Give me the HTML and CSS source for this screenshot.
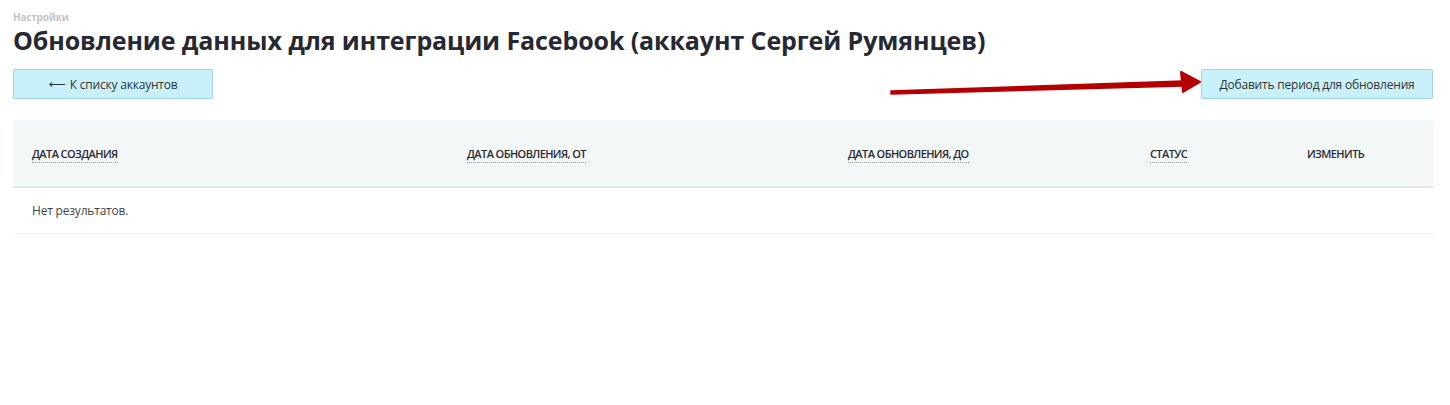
FILE: index.html
```html
<!DOCTYPE html>
<html lang="ru">
<head>
<meta charset="utf-8">
<title>Обновление данных для интеграции Facebook</title>
<link rel="stylesheet" href="styles.css">
</head>
<body>
<div class="page">
  <div class="crumb">Настройки</div>
  <h1 class="title">Обновление данных для интеграции Facebook (аккаунт Сергей Румянцев)</h1>
  <div class="toolbar">
    <a class="btn btn-back" href="#"><span class="back-arrow">&#x27F5;</span>К списку аккаунтов</a>
    <a class="btn btn-add" href="#">Добавить период для обновления</a>
    <svg class="pointer" width="313" height="32" viewBox="0 0 313 32" aria-hidden="true">
      <path d="M2 25 L294 15 L294 20 L2 28 Z" fill="#b40000" stroke="#b40000" stroke-width="1.5" stroke-linejoin="round"/>
      <path d="M292 6 L311 16 L294 26 Z" fill="#b40000" stroke="#b40000" stroke-width="2" stroke-linejoin="round"/>
    </svg>
  </div>
  <div class="grid">
    <div class="grid-head">
      <span class="col"><span class="sort">Дата создания</span></span>
      <span class="col"><span class="sort">Дата обновления, от</span></span>
      <span class="col"><span class="sort">Дата обновления, до</span></span>
      <span class="col"><span class="sort">Статус</span></span>
      <span class="col">Изменить</span>
    </div>
    <div class="grid-empty">Нет результатов.</div>
  </div>
</div>
</body>
</html>
```
FILE: styles.css
```css
html, body {
  margin: 0;
  padding: 0;
  background: #fff;
}

body {
  font-family: "Open Sans", "Noto Sans", sans-serif;
  color: #2b2b33;
}

.page {
  padding: 10px 17px 0 13px;
}

.crumb {
  font-size: 10px;
  font-weight: 700;
  color: #c4c4c8;
  line-height: 14px;
  letter-spacing: -0.2px;
}

.title {
  margin: 0;
  font-size: 25px;
  font-weight: 700;
  line-height: 32px;
  color: #262833;
  letter-spacing: -0.1px;
}

.toolbar {
  position: relative;
  display: flex;
  justify-content: space-between;
  align-items: center;
  margin-top: 13px;
}

.btn {
  display: flex;
  align-items: center;
  justify-content: center;
  height: 30px;
  box-sizing: border-box;
  background: #c8f1fb;
  border: 1px solid #9ed4e3;
  border-radius: 2px;
  color: #333;
  font-size: 12px;
  text-decoration: none;
  letter-spacing: -0.2px;
}

.back-arrow {
  font-family: "DejaVu Sans", sans-serif;
  font-size: 12px;
  margin-right: 4px;
  letter-spacing: 0;
}

.btn-back {
  width: 200px;
}

.btn-add {
  width: 232px;
}

/* red callout arrow pointing at the add button */
.pointer {
  position: absolute;
  right: 231px;
  top: -3px;
}

.grid {
  margin-top: 21px;
}

.grid-head {
  display: grid;
  grid-template-columns: 435px 381px 302px 157px 1fr;
  align-items: center;
  height: 66px;
  background: #f4f7f8;
  border-bottom: 2px solid #e3e6e8;
  font-size: 11px;
  font-weight: 600;
  text-transform: uppercase;
  color: #2b2b33;
  letter-spacing: -0.6px;
}

.col {
  padding-left: 19px;
}

.sort {
  border-bottom: 1px dotted #9a9a9a;
  padding-bottom: 1px;
}

.grid-empty {
  height: 45px;
  display: flex;
  align-items: center;
  padding-left: 19px;
  border-bottom: 1px solid #eceff0;
  font-size: 12px;
  color: #444;
  letter-spacing: -0.2px;
}
```
